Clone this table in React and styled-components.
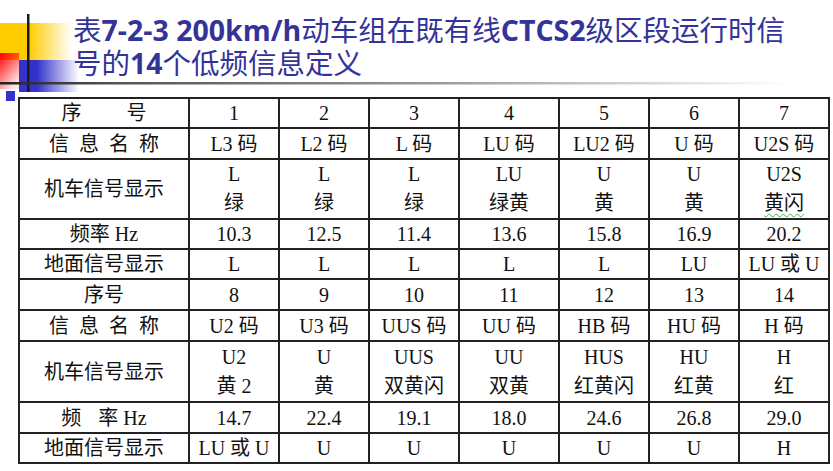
import React from 'react';
import styled, { createGlobalStyle } from 'styled-components';

const GlobalStyle = createGlobalStyle`
  html, body {
    margin: 0;
    padding: 0;
    background: #fff;
  }
`;

const Page = styled.div`
  width: 833px;
  height: 471px;
  overflow: hidden;
  background: #fff;
`;

const Header = styled.div`
  position: relative;
  height: 97px;
  box-sizing: border-box;
  padding: 14px 0 0 73px;
`;

const Ornament = styled.svg`
  position: absolute;
  top: 0;
  left: 0;
  z-index: 0;
  overflow: visible;
`;

const Title = styled.h1`
  position: relative;
  z-index: 1;
  margin: 0;
  font-family: 'Open Sans', 'Noto Sans CJK SC', sans-serif;
  font-weight: 400;
  font-size: 28.5px;
  line-height: 33px;
  color: #333399;
  white-space: nowrap;
`;

const Latin = styled.b`
  font-weight: 700;
`;

const Table = styled.table`
  margin-left: 18px;
  width: 810px;
  table-layout: fixed;
  border-collapse: collapse;
  font-family: 'Liberation Serif', 'Noto Sans CJK SC', serif;
  font-size: 20px;
  color: #111;
`;

const Row = styled.tr`
  height: ${(p) => p.$h}px;
`;

const Cell = styled.td`
  border: 2px solid #222;
  padding: 0;
  text-align: center;
  vertical-align: middle;
  line-height: 24px;
  white-space: nowrap;
  overflow: visible;
`;

const Spread = styled.span`
  letter-spacing: ${(p) => p.$gap}px;
  margin-right: -${(p) => p.$gap}px;
`;

const Gap = styled.span`
  margin-left: ${(p) => p.$gap}px;
`;

const Wavy = styled.span`
  text-decoration: underline wavy #4caf50;
  text-decoration-thickness: 1px;
  text-underline-offset: 3px;
`;

const Line = styled.div`
  line-height: 29px;
`;

const widths = [170, 90, 90, 90, 100, 90, 90, 90];

const groups = [
  {
    seqLabel: <Spread $gap={45}>序号</Spread>,
    freqLabel: '频率 Hz',
    seq: ['1', '2', '3', '4', '5', '6', '7'],
    names: ['L3 码', 'L2 码', 'L 码', 'LU 码', 'LU2 码', 'U 码', 'U2S 码'],
    loco: [
      ['L', '绿'],
      ['L', '绿'],
      ['L', '绿'],
      ['LU', '绿黄'],
      ['U', '黄'],
      ['U', '黄'],
      ['U2S', <Wavy key="w">黄闪</Wavy>],
    ],
    freq: ['10.3', '12.5', '11.4', '13.6', '15.8', '16.9', '20.2'],
    ground: ['L', 'L', 'L', 'L', 'L', 'LU', 'LU 或 U'],
    heights: [30, 31, 60, 30, 30],
  },
  {
    seqLabel: '序号',
    freqLabel: (
      <>
        <Spread $gap={17}>频</Spread>
        <Gap $gap={17}>率 Hz</Gap>
      </>
    ),
    seq: ['8', '9', '10', '11', '12', '13', '14'],
    names: ['U2 码', 'U3 码', 'UUS 码', 'UU 码', 'HB 码', 'HU 码', 'H 码'],
    loco: [
      ['U2', '黄 2'],
      ['U', '黄'],
      ['UUS', '双黄闪'],
      ['UU', '双黄'],
      ['HUS', '红黄闪'],
      ['HU', '红黄'],
      ['H', '红'],
    ],
    freq: ['14.7', '22.4', '19.1', '18.0', '24.6', '26.8', '29.0'],
    ground: ['LU 或 U', 'U', 'U', 'U', 'U', 'U', 'H'],
    heights: [31, 31, 61, 31, 30],
  },
];

const Ornaments = () => (
  <Ornament width="833" height="105" viewBox="0 0 833 105">
    <defs>
      <linearGradient id="yel" x1="0" x2="1" y1="0" y2="0">
        <stop offset="0" stopColor="#ffcc00" />
        <stop offset="0.4" stopColor="#ffcc00" />
        <stop offset="1" stopColor="#ffcc00" stopOpacity="0" />
      </linearGradient>
      <linearGradient id="blu" x1="0" x2="1" y1="0" y2="0">
        <stop offset="0" stopColor="#3333cc" />
        <stop offset="0.3" stopColor="#3333cc" />
        <stop offset="1" stopColor="#3333cc" stopOpacity="0" />
      </linearGradient>
      <linearGradient id="red" x1="0" x2="0.6" y1="0" y2="1">
        <stop offset="0" stopColor="#ff0000" />
        <stop offset="1" stopColor="#ff0000" stopOpacity="0.1" />
      </linearGradient>
      <linearGradient id="rule" x1="0" x2="1" y1="0" y2="0">
        <stop offset="0" stopColor="#222" />
        <stop offset="0.15" stopColor="#555" />
        <stop offset="0.55" stopColor="#999" />
        <stop offset="1" stopColor="#999" stopOpacity="0" />
      </linearGradient>
    </defs>
    <rect x="0" y="23" width="72" height="37" fill="url(#yel)" />
    <rect x="19" y="60" width="60" height="32" fill="url(#blu)" />
    <rect x="0" y="53" width="19" height="36" fill="url(#red)" />
    <rect x="27" y="14" width="2.5" height="78" fill="#1a1a1a" />
    <rect x="0" y="82" width="790" height="2.5" fill="url(#rule)" />
    <rect x="6" y="91" width="9" height="10" fill="#3333cc" />
  </Ornament>
);

const Group = ({ g }) => (
  <>
    <Row $h={g.heights[0]}>
      <Cell>{g.seqLabel}</Cell>
      {g.seq.map((v) => (
        <Cell key={v}>{v}</Cell>
      ))}
    </Row>
    <Row $h={g.heights[1]}>
      <Cell>
        <Spread $gap={10}>信息名称</Spread>
      </Cell>
      {g.names.map((v) => (
        <Cell key={v}>{v}</Cell>
      ))}
    </Row>
    <Row $h={g.heights[2]}>
      <Cell>机车信号显示</Cell>
      {g.loco.map(([a, b], i) => (
        <Cell key={i}>
          <Line>{a}</Line>
          <Line>{b}</Line>
        </Cell>
      ))}
    </Row>
    <Row $h={g.heights[3]}>
      <Cell>{g.freqLabel}</Cell>
      {g.freq.map((v) => (
        <Cell key={v}>{v}</Cell>
      ))}
    </Row>
    <Row $h={g.heights[4]}>
      <Cell>地面信号显示</Cell>
      {g.ground.map((v, i) => (
        <Cell key={i}>{v}</Cell>
      ))}
    </Row>
  </>
);

const App = () => (
  <Page>
    <GlobalStyle />
    <Header>
      <Ornaments />
      <Title>
        表<Latin>7-2-3 200km/h</Latin>动车组在既有线<Latin>CTCS2</Latin>级区段运行时信
        <br />
        号的<Latin>14</Latin>个低频信息定义
      </Title>
    </Header>
    <Table>
      <colgroup>
        {widths.map((w, i) => (
          <col key={i} style={{ width: w }} />
        ))}
      </colgroup>
      <tbody>
        {groups.map((g, i) => (
          <Group key={i} g={g} />
        ))}
      </tbody>
    </Table>
  </Page>
);

export default App;
